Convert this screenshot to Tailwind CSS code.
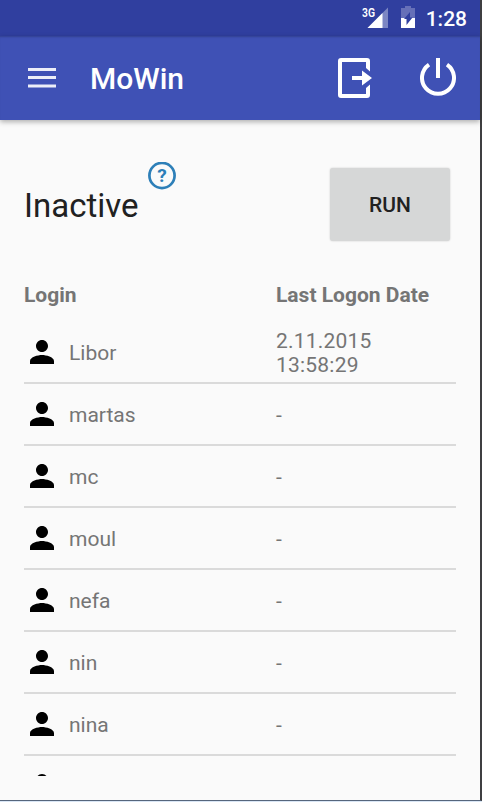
<!doctype html>
<html lang="en">
<head>
    <meta charset="UTF-8">
    <meta name="viewport" content="width=device-width, initial-scale=1.0">
    <title>MoWin</title>
    <script src="https://cdn.jsdelivr.net/npm/@tailwindcss/browser@4"></script>
</head>
<body class="h-[802px] overflow-hidden bg-[#d9e6f5] font-['Roboto',sans-serif]">

<!-- Device frame -->
<div class="h-[801px] w-[482px] border-r-2 border-b border-r-[#3f3f41] border-b-[#56667c] bg-[#fafafa] flex flex-col">

    <!-- Status bar -->
    <div class="h-9 shrink-0 bg-[#303f9f] flex items-center justify-end pr-[13px] text-white">
        <svg class="w-[27px] h-6 shrink-0" viewBox="0 0 27 24">
            <path d="M26 1.500v20.500H5.500z" fill="#7c86c3"/>
            <path d="M20.500 7V22H5.500z" fill="#fff"/>
            <text x="0" y="10.500" font-size="12" font-weight="600" fill="#fff" textLength="13" lengthAdjust="spacingAndGlyphs">3G</text>
        </svg>
        <svg class="w-[14px] h-[22px] ml-3 mr-[11px] -mt-[2px] shrink-0" viewBox="0 0 14 22">
            <path d="M4 0h6v2h4v20H0V2h4z" fill="#6670b8"/>
            <path d="M0 12h14v10H0z" fill="#fff"/>
            <path d="M9 6v5.500h2.500L5.500 19v-6H3z" fill="#303f9f"/>
        </svg>
        <span class="pt-[2px] text-[21px] leading-6 font-medium">1:28</span>
    </div>

    <!-- Toolbar -->
    <header class="h-[84px] shrink-0 bg-[#3f51b5] text-white flex items-center pl-7 pr-6 shadow-[0_2px_5px_rgba(0,0,0,0.3),inset_0_2px_2px_-1px_rgba(0,0,0,0.2)]">
        <svg class="w-7 h-5 shrink-0" viewBox="0 0 28 20" fill="#fff">
            <path d="M0 0h28v3H0zM0 8h28v3H0zM0 16.500h28v3H0z" opacity=".9"/>
        </svg>
        <h1 class="ml-[34px] mt-[2px] text-[30px] leading-9 font-medium">MoWin</h1>
        <!-- Logout -->
        <svg class="w-[34px] h-10 ml-auto shrink-0" viewBox="0 0 34 40" fill="none">
            <path d="M32 13.500l-4-3.500V4H4v32h24v-6l4-3.500V37a3 3 0 0 1-3 3H3a3 3 0 0 1-3-3V3a3 3 0 0 1 3-3h26a3 3 0 0 1 3 3z" fill="#fff"/>
            <path d="M14 18h10v-5.500l10 7.500-10 7.500V22H14z" fill="#fff"/>
        </svg>
        <!-- Power -->
        <svg class="w-9 h-[38px] ml-12 -mt-[2px] shrink-0" viewBox="0 0 36 38" fill="none" stroke="#fff" stroke-width="4">
            <path d="M18 0v20"/>
            <path d="M9 6.600a16 16 0 1 0 18 0"/>
        </svg>
    </header>

    <main class="flex-1 flex flex-col px-6 pb-6 min-h-0">
        <!-- Group state -->
        <div class="h-[152px] pt-12 shrink-0 flex items-start">
            <h2 class="mt-[18px] text-[33px] leading-[39px] text-[#212121]">Inactive</h2>
            <svg class="w-7 h-7 ml-[9px] -mt-[6px] shrink-0" viewBox="0 0 28 28">
                <circle cx="14" cy="13.500" r="12.600" fill="none" stroke="#2d7fb8" stroke-width="2.700"/>
                <text x="14" y="20" font-size="19" font-weight="700" fill="#2d7fb8" text-anchor="middle">?</text>
            </svg>
            <button class="ml-auto mr-[6px] w-[120px] h-[73px] pt-[3px] rounded-[3px] bg-[#d6d7d7] text-[21px] font-medium text-[#212121] shadow-[0_0_2px_rgba(0,0,0,0.2)]">RUN</button>
        </div>

        <!-- Column titles -->
        <div class="h-[50px] pt-[11px] shrink-0 grid grid-cols-[252px_1fr] text-[21px] leading-6 font-bold text-[#757575]">
            <span>Login</span>
            <span>Last Logon Date</span>
        </div>

        <!-- Users -->
        <ul id="users" class="flex-1 min-h-0 overflow-hidden text-[21px] leading-6 text-[#757575]"></ul>
    </main>
</div>

<script>
    const users = [
        ['Libor', '2.11.2015<br>13:58:29'],
        ['martas', '-'],
        ['mc', '-'],
        ['moul', '-'],
        ['nefa', '-'],
        ['nin', '-'],
        ['nina', '-'],
        ['', ''],
    ];

    document.getElementById('users').innerHTML = users.map(([login, date]) => `
        <li class="h-[62px] border-b-2 border-[#dadada] grid grid-cols-[252px_1fr] items-center">
            <div class="flex items-center gap-[9px]">
                <svg class="w-9 h-9 shrink-0" viewBox="0 0 24 24" fill="#000">
                    <path d="M12 12c2.210 0 4-1.790 4-4s-1.790-4-4-4-4 1.790-4 4 1.790 4 4 4zm0 2c-2.670 0-8 1.340-8 4v2h16v-2c0-2.660-5.330-4-8-4z"/>
                </svg>
                <span class="pt-[2px]">${login}</span>
            </div>
            <span class="pt-[2px] tracking-[0.01em]">${date}</span>
        </li>`).join('');
</script>
</body>
</html>
